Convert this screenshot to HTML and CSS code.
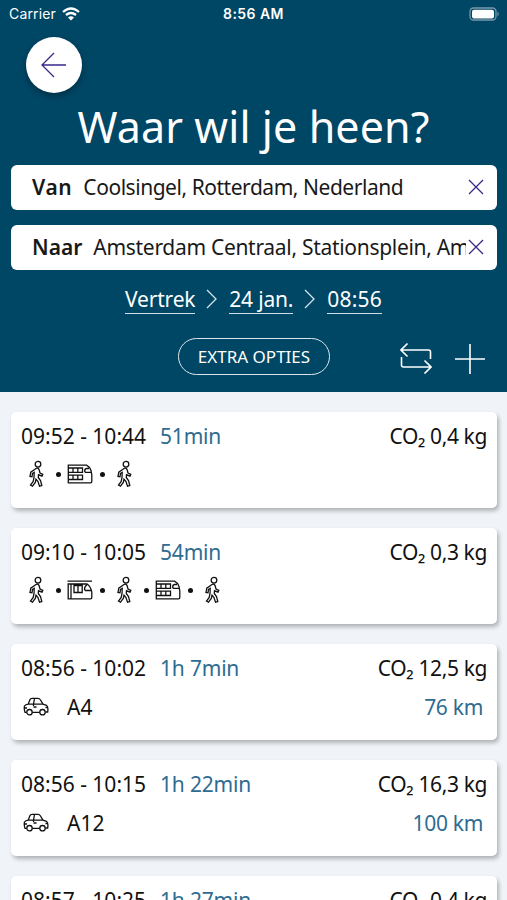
FILE: index.html
```html
<!DOCTYPE html>
<html lang="nl">
<head>
<meta charset="utf-8">
<title>Reisplanner</title>
<link rel="stylesheet" href="styles.css">
</head>
<body>
<svg class="symbols" aria-hidden="true">
  <symbol id="walk" viewBox="0 0 16 28"><circle cx="10" cy="4.2" r="2.8"/><path d="M8 8.5Q10.5 7.5 11.2 10L12 13 14.8 14.3 14 16.2 10.5 14.8 10.3 17.5 12.5 20.5 13.8 25.5 11.5 26.2 10 21.5 8 19.2 7.3 22.5 4.5 26.2 2.5 25 5.2 21.5 6 17.5 6.2 12.5 4.5 13.5 4 16.8 2 16.5 2.8 12.2Z"/></symbol>
  <symbol id="train" viewBox="0 0 26 20"><path d="M1.3 1.2H19.5Q23 3 24 6.5L24.8 11V17.5Q24.8 18.8 23.5 18.8H1.3ZM1.3 4H15.5V8.3H1.3M6 4V8.3M10.8 4V8.3M22 4.5H19.5Q17.5 4.8 17.7 7.5L18.5 8.3H24M1.3 11.2H15.5V15.5H1.3M6 11.2V15.5M10.8 11.2V15.5"/></symbol>
  <symbol id="tram" viewBox="0 0 26 20"><path d="M.5 1.2H25M1.2 4H20Q23.5 6 24.8 12V17.5Q24.8 18.8 23.5 18.8H1.2ZM4 4V18.5M7 5.5H15.2V12.5H7ZM11 5.5V12.5M20 5Q17.5 6 17.5 9.5L18.5 10.5H24"/></symbol>
  <symbol id="car" viewBox="0 0 26 20"><path d="M3.7 15.3H2Q.8 12 1.5 9Q2.5 7.5 5.2 7.2L7 2.5Q7.5 1.3 9 1.3H15Q16.5 1.3 17.5 3L20 7.2 23.5 8.3Q25.5 9.5 24.7 15H22.5M9.3 15.3H16.7M5.2 7.2H20M11.5 1.5 10.5 7.2V9M10.5 10H13.5M1.2 11H4M22.5 10.5H25"/><circle cx="6.5" cy="15.2" r="2.7"/><circle cx="19.5" cy="15.2" r="2.7"/></symbol>
  <symbol id="close" viewBox="0 0 16 16"><path d="M1 1 15 15M15 1 1 15"/></symbol>
  <symbol id="chevron" viewBox="0 0 12 20"><path d="M1 1 10 10 1 19"/></symbol>
</svg>
<header class="planner">
  <div class="status">
    <span class="carrier">Carrier</span>
    <svg class="wifi" viewBox="0 0 18 14"><path d="M1 5Q9-2 17 5M4 8Q9 4 14 8"/><path class="solid" d="M6 10.5Q9 8 12 10.5L9 13.5Z"/></svg>
    <span class="clock">8:56 AM</span>
    <svg class="battery" viewBox="0 0 31 14"><rect class="shell" x="1" y="1" width="26" height="12" rx="3.5"/><rect class="charge" x="3" y="2.7" width="22" height="8.8" rx="2"/><path class="tip" d="M28.5 4.5Q31 7 28.5 9.5Z"/></svg>
  </div>
  <button class="back" aria-label="Terug"><svg viewBox="0 0 26 26"><path d="M25 13H1M13 1 1 13 13 25"/></svg></button>
  <h1 class="title">Waar wil je heen?</h1>
  <div class="field"><b class="label van">Van</b><span class="place from">Coolsingel, Rotterdam, Nederland</span><svg class="close"><use href="#close"/></svg></div>
  <div class="field"><b class="label">Naar</b><span class="place to">Amsterdam Centraal, Stationsplein, Amsterdam</span><svg class="close"><use href="#close"/></svg></div>
  <div class="moment">
    <span class="choice">Vertrek</span><svg class="chevron"><use href="#chevron"/></svg><span class="choice">24 jan.</span><svg class="chevron"><use href="#chevron"/></svg><span class="choice time">08:56</span>
  </div>
  <div class="actions">
    <button class="extra">EXTRA OPTIES</button>
    <svg class="swap" viewBox="0 0 32 32"><path d="M30.5 17V10Q30.5 8 28.5 8H1M7.5 1.5 1 8 7.5 14.5M1.5 15V23Q1.5 25 3.5 25H30.5M24.5 18.5 31 25 24.5 31.5"/></svg>
    <svg class="plus" viewBox="0 0 32 32"><path d="M1 16H31M16 1V31"/></svg>
  </div>
</header>
<main class="trips">
  <article class="trip">
    <div class="row"><span class="times">09:52 - 10:44</span><span class="duration">51min</span><span class="co2">CO₂ 0,4 kg</span></div>
    <div class="legs"><svg class="walk"><use href="#walk"/></svg><i class="dot"></i><svg class="vehicle"><use href="#train"/></svg><i class="dot"></i><svg class="walk"><use href="#walk"/></svg></div>
  </article>
  <article class="trip">
    <div class="row"><span class="times">09:10 - 10:05</span><span class="duration">54min</span><span class="co2">CO₂ 0,3 kg</span></div>
    <div class="legs"><svg class="walk"><use href="#walk"/></svg><i class="dot"></i><svg class="vehicle"><use href="#tram"/></svg><i class="dot"></i><svg class="walk"><use href="#walk"/></svg><i class="dot"></i><svg class="vehicle"><use href="#train"/></svg><i class="dot"></i><svg class="walk"><use href="#walk"/></svg></div>
  </article>
  <article class="trip">
    <div class="row"><span class="times">08:56 - 10:02</span><span class="duration">1h 7min</span><span class="co2">CO₂ 12,5 kg</span></div>
    <div class="road"><svg class="vehicle"><use href="#car"/></svg><span>A4</span><span class="distance">76 km</span></div>
  </article>
  <article class="trip">
    <div class="row"><span class="times">08:56 - 10:15</span><span class="duration">1h 22min</span><span class="co2">CO₂ 16,3 kg</span></div>
    <div class="road"><svg class="vehicle"><use href="#car"/></svg><span>A12</span><span class="distance">100 km</span></div>
  </article>
  <article class="trip">
    <div class="row"><span class="times">08:57 - 10:25</span><span class="duration">1h 27min</span><span class="co2">CO₂ 0,4 kg</span></div>
  </article>
</main>
</body>
</html>
```
FILE: styles.css
```css
* { box-sizing: border-box; }
html, body { height: 100%; }
body { margin: 0; overflow: hidden; background: #f0f3f8; color: #111; font: 21px/30px "Noto Sans", sans-serif; white-space: nowrap; }
svg { display: block; flex: none; fill: none; stroke: currentColor; stroke-width: 1.3; }
button { font: inherit; color: inherit; padding: 0; }
.symbols { width: 0; height: 0; position: absolute; }
.planner { height: 392px; background: #004665; color: #fff; overflow: hidden; }
.status { display: grid; grid-template-columns: 48px 20px 1fr 31px; align-items: center; height: 28px; padding: 0 7px 0 9px; font: 14px/20px Inter, sans-serif; column-gap: 5px; }
.carrier { letter-spacing: .15px; }
.wifi { width: 18px; height: 14px; stroke-width: 2.3; }
.wifi .solid, .battery .charge, .battery .tip { fill: #fff; stroke: none; }
.clock { font-weight: 600; letter-spacing: .45px; margin-left: 136px; }
.battery { width: 31px; height: 14px; }
.battery .shell { stroke: #7899aa; }
.battery .tip { fill: #7899aa; }
.back { display: grid; place-items: center; width: 56px; height: 56px; margin: 9px 0 0 26px; border: 0; border-radius: 50%; background: #fff; color: #38298a; box-shadow: 0 3px 6px #0005; }
.back svg { width: 26px; height: 26px; }
.title { margin: 7px 0 0; height: 65px; font-size: 43px; line-height: 54px; font-weight: 400; text-align: center; letter-spacing: .1px; }
.field { display: flex; align-items: center; height: 45px; margin: 0 10px 15px 11px; padding: 0 13px 1px 21px; border-radius: 6px; background: #fff; color: #191919; }
.label { font-weight: 600; }
.van { letter-spacing: .6px; }
.place { flex: 1; min-width: 0; margin-left: 11px; overflow: hidden; }
.from { letter-spacing: -.46px; }
.to { letter-spacing: -.3px; }
.close { width: 16px; height: 16px; margin-left: 2px; color: #38298a; }
.moment { display: flex; justify-content: center; align-items: center; height: 30px; margin-top: -1px; }
.choice { border-bottom: 1.5px solid #cfe0e8; line-height: 28px; letter-spacing: -.2px; }
.time { letter-spacing: .2px; }
.chevron { width: 12px; height: 20px; margin: 0 11px; color: #d5e3eb; }
.actions { display: flex; align-items: center; height: 37px; margin-top: 24px; padding-left: 178px; }
.extra { width: 152px; height: 37px; border: 1.5px solid #dce8ee; border-radius: 19px; background: none; font-size: 17px; }
.swap, .plus { width: 32px; height: 32px; stroke-width: 1.6; }
.swap { margin: 3px 0 0 70px; }
.plus { margin: 4px 0 0 22px; }
.trips { padding: 20px 10px 0 11px; }
.trip { height: 96px; margin-bottom: 20px; padding: 9px 10px 0; border-radius: 5px; background: #fff; box-shadow: 2px 3px 4px #0004; }
.row, .road, .legs { display: flex; align-items: center; height: 30px; }
.duration { margin-left: 14px; color: #2e6c91; letter-spacing: -.2px; }
.co2, .distance { margin-left: auto; }
.co2 { letter-spacing: -.38px; }
.distance { color: #2e6c91; padding-right: 4px; letter-spacing: -.3px; }
.legs { margin-top: 8px; padding-left: 7px; }
.walk { width: 16px; height: 28px; }
.vehicle { width: 26px; height: 20px; }
.dot { flex: none; width: 5px; height: 5px; border-radius: 50%; background: #111; margin: 0 6.5px 0 11.5px; }
.vehicle + .dot { margin: 0 11.5px 0 6.5px; }
.road { margin-top: 9px; padding-left: 2px; }
.road .vehicle { margin-right: 18px; }
```
